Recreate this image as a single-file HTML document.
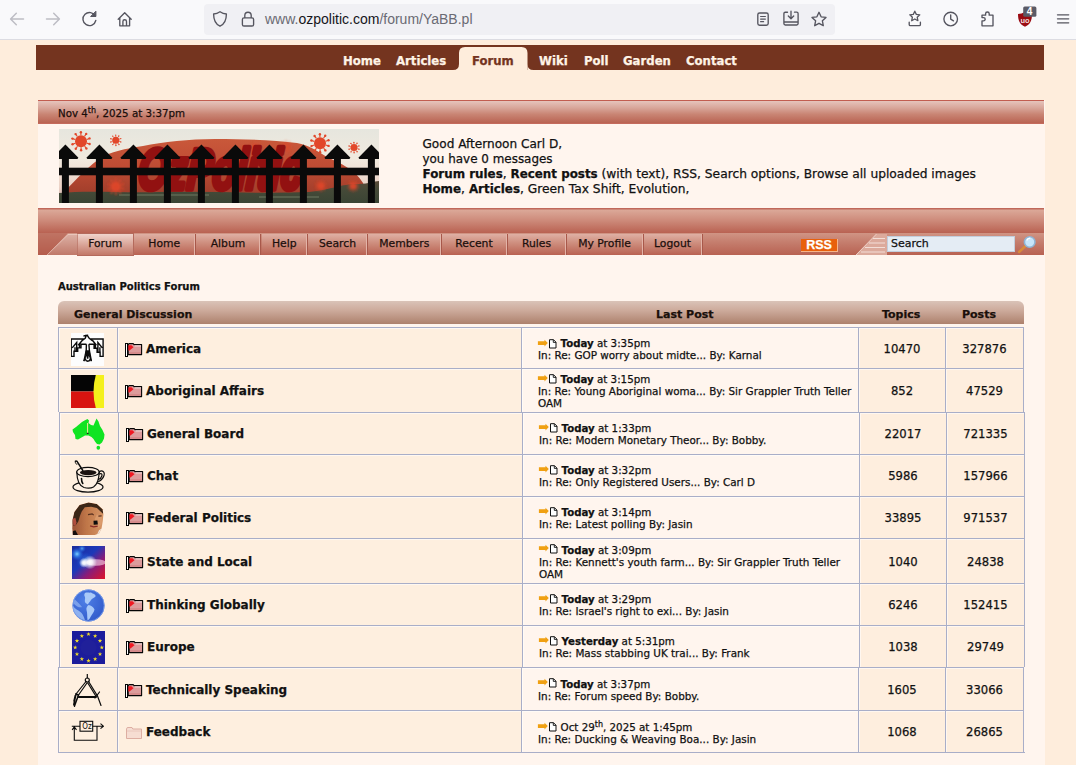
<!DOCTYPE html>
<html><head><meta charset="utf-8"><title>Australian Politics Forum</title>
<style>
html,body{margin:0;padding:0}
body{width:1076px;height:765px;overflow:hidden;position:relative;background:#feeddc;font-family:"DejaVu Sans","Liberation Sans",sans-serif;color:#111}
.abs,.abs *{position:absolute}
div,span,a,svg{position:absolute;white-space:nowrap}
b,sup{position:static}
/* browser chrome */
#chrome{left:0;top:0;width:1076px;height:39px;background:#f9f9fb;border-bottom:1px solid #dcdce2}
#url{left:204px;top:4px;width:631px;height:31px;background:#f0f0f4;border-radius:4px}
#urlt{left:265px;top:11px;font:14px/17px "Liberation Sans",sans-serif;color:#6a6a73}
#urlt b{font-weight:normal;color:#15141a}
#urlt,#chromeicons text{-webkit-text-stroke:0}
/* top nav */
#topnav{left:36px;top:45px;width:1008px;height:25px;background:#74341f}
#topnav a{top:7.5px;font:bold 13px/15px "DejaVu Sans Condensed","DejaVu Sans",sans-serif;color:#fff3e6}
#tab{left:459px;top:47px;width:70px;height:26px;background:#feeddc;border-radius:9px 9px 0 0}
/* container */
#cont{left:38px;top:100px;width:1007px;height:665px;background:#fff5ee}
.bar{left:0;width:1006px}
#datebar{top:0;height:22px;background:linear-gradient(#e6c4bc 0,#d9a79b 30%,#c98574 60%,#b96352 100%);border-top:1px solid #c25d50;border-bottom:1px solid #c46a5c}
#date{left:20px;top:7px;font:10.25px/13px "DejaVu Sans",sans-serif;color:#1a0d0a}
#date sup{font-size:8px;line-height:0;vertical-align:4px}
#midbar{top:108px;height:25px;background:linear-gradient(#c0685a 0,#c0685a 4%,#dba898 8%,#cf8e7e 45%,#b96252 100%)}
#menubar{top:133px;height:22px;background:linear-gradient(#d09484 0,#c47c6c 45%,#b86252 100%)}
#hello{left:384.5px;top:36.500px;font:12.25px/15.050px "DejaVu Sans",sans-serif;color:#111;white-space:pre}
#menu{left:0;top:233px;width:1076px;height:22px}
.mi{top:1px;height:21px;font:10.8px/19px "DejaVu Sans",sans-serif;color:#1c0f0c;text-align:center;box-sizing:border-box;border-right:1px solid #a8584a;box-shadow:inset -1px 0 0 #e3b4a8;background:linear-gradient(#dfb0a4 0,#cd8c7c 45%,#b96252 100%)}
.mi.act{top:0;height:23px;line-height:19px;border:1px solid #b46a5c;background:linear-gradient(#f0d4cc 0,#dcaa9e 45%,#c27868 100%);box-shadow:none}
#rss{left:801px;top:239px;width:36px;height:12px;background:#e8600c;border-right:1px solid #f6b48a;border-bottom:1px solid #f6b48a;color:#fff;font:bold 12.5px/12.5px "Liberation Sans",sans-serif;text-align:center}
#sbox{left:887px;top:236px;width:128px;height:16px;background:#e4ecf4;border:1px solid #c3cedc;box-sizing:border-box;font:11px/14px "DejaVu Sans",sans-serif;padding-left:3px;color:#111}
#hello b{font-size:11.9px}
#hello span{position:static}
#hello .h1{font-size:12.1px}
#hello .h2{font-size:11.95px}
body{-webkit-text-stroke:0.25px currentColor}
#title{left:20px;top:181px;font:bold 10px/12px "DejaVu Sans",sans-serif;color:#111}
/* table */
#thead{left:58px;top:301px;width:966px;height:23px;border-radius:6px 6px 0 0;background:linear-gradient(#dac3b8 0,#cdab9c 40%,#ad816d 100%)}
#thead span{top:7px;font:bold 11px/13px "DejaVu Sans",sans-serif;color:#1a0f0a}
.row{left:58px;width:966px;border-top:1px solid #a9aec8}
.row.s{left:59px}
.row div{top:0;bottom:0;box-shadow:inset 1px 1px 0 rgba(255,255,255,.55)}
.c1{left:0;width:59px;background:#feefdf;border-left:1px solid #a9aec8}
.c2{left:59px;width:404px;background:#feefdf;border-left:1px solid #a9aec8}
.c3{left:463px;width:337px;background:#fff5ee;border-left:1px solid #a9aec8}
.c4{left:800px;width:86px;background:#feeede;border-left:1px solid #a9aec8}
.c5{left:887px;width:77px;background:#feeede;border-left:1px solid #a9aec8;border-right:1px solid #a9aec8}
.nm{left:28px;font:bold 12px/14px "DejaVu Sans",sans-serif;color:#111}
.lp{left:16px;font:10.4px/12px "DejaVu Sans",sans-serif;color:#111;white-space:pre}
.lp .l1{position:static;font-size:10.3px;padding-left:22.6px;line-height:0}
.lp .l1 *{line-height:0}
.lp .l1 b{font-size:10.2px}
.lp sup{font-size:8px;line-height:0;vertical-align:4px}
.num{left:0;right:0;text-align:center;font:11.6px/14px "DejaVu Sans",sans-serif;color:#111}
</style></head><body>
<div id="chrome"></div>
<div id="url"></div>
<div id="urlt">www.<b>ozpolitic.com</b>/forum/YaBB.pl</div>

<div id="topnav">
<a style="left:307px">Home</a><a style="left:360px">Articles</a><a style="left:503px">Wiki</a><a style="left:548px">Poll</a><a style="left:587px">Garden</a><a style="left:650px">Contact</a>
</div>
<svg width="90" height="30" style="position:absolute;left:450px;top:44px"><path d="M3.500 26.500h5.500v-0.500q0-.1 0-.5v-16.500q0-6 6-6h56.500q6 0 6 6v16.500q0 .400 0 1h5.500v4h-80z" fill="#feeddc"/><path d="M3 26q6 0 6-6v6zM83.500 26q-6 0-6-6v6z" fill="#feeddc"/></svg>
<a style="left:472px;top:52.5px;font:bold 13px/15px 'DejaVu Sans Condensed','DejaVu Sans',sans-serif;color:#74341f">Forum</a>

<div id="cont">
 <div class="bar" id="datebar"></div>
 <div id="date">Nov 4<sup>th</sup>, 2025 at 3:37pm</div>
 <div id="hello"><span class="h1">Good Afternoon Carl D,</span>
<span class="h2">you have 0 messages</span>
<b>Forum rules</b>, <b>Recent posts</b> (with text), RSS, Search options, Browse all uploaded images
<b>Home</b>, <b>Articles</b>, Green Tax Shift, Evolution,</div>
 <div class="bar" id="midbar"></div>
 <div class="bar" id="menubar"></div>
 <div id="title">Australian Politics Forum</div>
</div>

<svg width="0" height="0" style="position:absolute"><defs>
<radialGradient id="gGlobe" cx=".4" cy=".35" r=".75"><stop offset="0" stop-color="#4e7fe6"/><stop offset="1" stop-color="#2f57c8"/></radialGradient>
<radialGradient id="gW" cx=".5" cy=".5" r=".5"><stop offset="0" stop-color="#fff"/><stop offset=".35" stop-color="#fff" stop-opacity=".85"/><stop offset="1" stop-color="#fff" stop-opacity="0"/></radialGradient>
<radialGradient id="gB" cx=".5" cy=".5" r=".5"><stop offset="0" stop-color="#7fd0ff"/><stop offset=".4" stop-color="#3a8cf0" stop-opacity=".8"/><stop offset="1" stop-color="#2060e0" stop-opacity="0"/></radialGradient>
<linearGradient id="gPol" x1="0" y1="0" x2="1" y2="1"><stop offset="0" stop-color="#1a2c9c"/><stop offset=".42" stop-color="#1c38b8"/><stop offset=".66" stop-color="#8a1c78"/><stop offset="1" stop-color="#e01428"/></linearGradient>
<filter id="b1"><feGaussianBlur stdDeviation="0.6"/></filter>
<symbol id="ic_america" viewBox="0 0 33 33"><rect width="33" height="33" fill="#fdfdfd"/><path d="M13.9 6.0 L0.2 6.0 L0.2 23.4 L3.0 23.4 L3.0 18.2 L6.7 18.2 L6.7 14.9 L10.0 14.9 L10.0 11.2 L15.4 11.2 M18.4 6.0 L32.1 6.0 L32.1 23.4 L29.1 23.4 L29.1 19.2 L26.1 19.2 L26.1 15.2 L23.1 15.2 L23.1 11.2 L17.9 11.2 M1.2 14.9 L5.7 9.5 L5.7 17.7 M4.0 14.2 L4.0 17.9 M7.2 12.2 L11.4 7.2 M8.5 10.2 L8.5 14.7 M31.3 14.9 L26.9 9.5 L26.9 18.9 M28.9 14.2 L28.9 18.9 M25.4 12.2 L21.4 7.2 M24.4 10.7 L24.4 14.9 M12.4 3.1 L14.4 2.5 L17.2 2.2 M15.2 2.7 L14.2 5.2 L10.9 7.7 M16.4 2.7 L18.2 5.2 L21.4 7.7 M15.4 11.2 L15.2 17.7 L12.9 28.1 M17.9 11.2 L18.4 17.7 L20.4 28.1 M14.0 25.6 L15.2 27.6 L16.7 28.2 L18.4 27.6 L19.5 25.6" fill="none" stroke="#0a0a0a" stroke-width="1.400" stroke-linejoin="miter"/><path d="M14.7 17.2 L18.7 17.2 L19.2 21.6 L17.4 23.6 L16.4 21.1 L15.7 23.6 L13.9 21.6z" fill="#0a0a0a"/><path d="M12.9 28.1 L15.9 20.1 L16.4 25.6 M20.4 28.1 L17.4 20.1 L16.8 25.6" fill="none" stroke="#0a0a0a" stroke-width="1.200"/></symbol>
<symbol id="ic_abo" viewBox="0 0 33 33"><rect width="33" height="16.500" fill="#050505"/><rect y="16.500" width="33" height="16.500" fill="#d81410"/><circle cx="82.500" cy="16.500" r="60" fill="#f4f01c"/></symbol>
<symbol id="ic_aus" viewBox="0 0 33 33"><path d="M0.500 11.500L4 9L7 6.500L10 4L12.500 2.500L15.500 1L17 2.500L16.500 5L19 7L21.500 7.500L23 4L24.500 0.500L26.500 3.500L28 8L30.500 12L32.500 16.500L32 20.500L30 24.500L27.500 26.500L25 26L23 23.500L21.500 21L19.500 19L16.500 17.500L13 17.500L9.500 19.500L6 21.500L3.500 21L3 17L1 14z" fill="#10e422"/><ellipse cx="26.300" cy="29.800" rx="1.800" ry="2" fill="#10e422"/><path d="M15.600 5V15" stroke="#f4e89a" stroke-width="1"/><rect x="14.800" y="14.800" width="1.800" height="1.200" fill="#222"/></symbol>
<symbol id="ic_chat" viewBox="0 0 33 33"><g fill="none" stroke="#0c0c0c" stroke-width="1.200" stroke-linecap="round">
<ellipse cx="16" cy="27" rx="15" ry="5.200" fill="#fdf0e3"/>
<path d="M4.800 12C5 20 7.500 26 12 27.500C15 28.300 19 28.300 21.500 27C25.500 24.500 27 18 27.200 12" fill="#fdf0e3"/>
<ellipse cx="16" cy="12" rx="11.300" ry="4.600" fill="#fdf0e3"/>
<ellipse cx="16.200" cy="12.600" rx="8.300" ry="2.600" fill="#1a1210" stroke="none"/>
<path d="M27 12C30.500 9.500 33 12 32 15.500C31 19 28 21.500 25.500 21.500M27.200 14C29 13 30.500 13.800 29.800 16C29.200 18 28 19 26.500 19.500"/>
<path d="M9.500 18.500C9.500 20.500 10 22.500 10.800 23.500" stroke-width="1.600"/>
<path d="M3.500 1.200C4.500 0.800 5.500 1.800 6 3L10.800 10.500" stroke-width="1.500"/>
<path d="M3.300 1.500C3 3 4 4.500 5 4.200" stroke-width="1"/>
</g></symbol>
<symbol id="ic_fed" viewBox="0 0 33 33"><defs><linearGradient id="gSkin" x1="0" y1="0" x2="1" y2="0"><stop offset="0" stop-color="#9a5236"/><stop offset=".45" stop-color="#bf7648"/><stop offset="1" stop-color="#d79666"/></linearGradient><clipPath id="cHead"><path d="M0.8 33.0 L0.3 26.2 L0.5 17.8 L2.4 9.9 L7.6 3.1 L16.5 0.5 L24.9 2.1 L30.6 7.3 L31.4 12.6 L30.7 19.4 L29.6 26.2 L27.0 31.4 L22.8 33.0z"/></clipPath></defs>
<g filter="url(#b1)"><path d="M0.8 33.0 L0.3 26.2 L0.5 17.8 L2.4 9.9 L7.6 3.1 L16.5 0.5 L24.9 2.1 L30.6 7.3 L31.4 12.6 L30.7 19.4 L29.6 26.2 L27.0 31.4 L22.8 33.0z" fill="url(#gSkin)"/><g clip-path="url(#cHead)"><path d="M24.9 12.6 L30.1 14.1 L29.6 22.0 L26.4 26.2 L23.8 23.0 L22.8 16.8z" fill="#dea070" opacity=".7"/><path d="M0.5 18.8 L2.4 9.9 L7.6 3.1 L16.5 0.5 L24.9 2.1 L30.6 7.3 L31.3 12.0 L29.1 9.9 L24.9 6.0 L19.1 4.7 L12.8 5.2 L9.7 9.4 L7.9 14.1 L6.3 19.4 L3.9 23.0 L1.8 24.1 L0.8 22.0z" fill="#3a2519"/><path d="M0.8 16.8 L3.4 15.7 L4.5 20.4 L3.4 24.1 L1.3 23.0z" fill="#b04e3e"/><path d="M0.5 33.0 L0.8 29.3 L3.4 28.3 L6.0 33.0z" fill="#14100e"/><path d="M24.9 33.0 L27.0 28.3 L30.1 26.2 L29.1 30.9 L27.5 33.0z" fill="#efe4dc"/></g>
<path d="M21.5 18.8 L25.4 18.6 L25.9 22.5 L21.7 22.8z" fill="#100a08"/><path d="M18.1 23.8 L21.7 24.9 L25.7 24.1" fill="none" stroke="#8a2c28" stroke-width="1.300"/><path d="M16.0 12.6 L20.2 11.8 L21.7 13.1 M26.4 14.1 L29.6 13.9" fill="none" stroke="#5a3020" stroke-width="1.200"/></g></symbol>
<symbol id="ic_state" viewBox="0 0 33 33"><rect width="33" height="33" fill="url(#gPol)"/><circle cx="5" cy="8" r="6.500" fill="url(#gB)"/><circle cx="10" cy="2.500" r="4" fill="url(#gB)" opacity=".7"/><circle cx="13" cy="15" r="9" fill="url(#gB)" opacity=".45"/><ellipse cx="24" cy="16.500" rx="10" ry="3.200" fill="#ffd8e6" opacity=".6" filter="url(#b1)"/><circle cx="12" cy="16.800" r="5" fill="url(#gW)"/><circle cx="18" cy="16.300" r="7" fill="url(#gW)"/></symbol>
<symbol id="ic_globe" viewBox="0 0 33 33"><circle cx="16.500" cy="16.500" r="16" fill="url(#gGlobe)"/><g fill="#a9c9f8" filter="url(#b1)">
<path d="M13 4C15 3 17 4 19 3.500C21 5 24 5 23.500 7.500C22 9.500 20 9 19 11C18 13 16.500 13.500 16 15.500L13.500 14C12 12 13.500 10 13 8C12 7 12 5 13 4z"/>
<path d="M16.500 16C19 16.500 21.500 18 22.500 20.500C22 23.500 20 25 18.500 28C17.500 30 16.500 31.500 15.500 31C15 27 15.500 24 14.500 21C14 19 15 17 16.500 16z"/>
<path d="M1 17C3 20 6 21 9 23.500C11 25.500 12 28 13 31.500C8 30 3 26 1 20z" opacity=".75"/>
<path d="M2.500 10C5 13 8 15 10 18C8 19 5 18 1.500 14.500z" opacity=".55"/>
</g><circle cx="16.500" cy="16.500" r="15.700" fill="none" stroke="#7fa4ee" stroke-width=".8"/></symbol>
<symbol id="ic_eu" viewBox="0 0 33 33"><rect width="33" height="33" fill="#1c1c9c"/><circle cx="16.500" cy="16.500" r="8" fill="#20209a"/><g fill="#f0dc28"><polygon points="16.50,0.90 17.04,2.46 18.69,2.49 17.37,3.48 17.85,5.06 16.50,4.12 15.15,5.06 15.63,3.48 14.31,2.49 15.96,2.46"/><polygon points="23.15,2.68 23.69,4.24 25.34,4.27 24.02,5.27 24.50,6.84 23.15,5.90 21.80,6.84 22.28,5.27 20.96,4.27 22.61,4.24"/><polygon points="28.02,7.55 28.56,9.11 30.21,9.14 28.89,10.13 29.37,11.71 28.02,10.77 26.67,11.71 27.14,10.13 25.83,9.14 27.48,9.11"/><polygon points="29.80,14.20 30.34,15.76 31.99,15.79 30.67,16.78 31.15,18.36 29.80,17.42 28.45,18.36 28.93,16.78 27.61,15.79 29.26,15.76"/><polygon points="28.02,20.85 28.56,22.41 30.21,22.44 28.89,23.43 29.37,25.01 28.02,24.07 26.67,25.01 27.14,23.43 25.83,22.44 27.48,22.41"/><polygon points="23.15,25.72 23.69,27.27 25.34,27.31 24.02,28.30 24.50,29.88 23.15,28.94 21.80,29.88 22.28,28.30 20.96,27.31 22.61,27.27"/><polygon points="16.50,27.50 17.04,29.06 18.69,29.09 17.37,30.08 17.85,31.66 16.50,30.72 15.15,31.66 15.63,30.08 14.31,29.09 15.96,29.06"/><polygon points="9.85,25.72 10.39,27.27 12.04,27.31 10.72,28.30 11.20,29.88 9.85,28.94 8.50,29.88 8.98,28.30 7.66,27.31 9.31,27.27"/><polygon points="4.98,20.85 5.52,22.41 7.17,22.44 5.86,23.43 6.33,25.01 4.98,24.07 3.63,25.01 4.11,23.43 2.79,22.44 4.44,22.41"/><polygon points="3.20,14.20 3.74,15.76 5.39,15.79 4.07,16.78 4.55,18.36 3.20,17.42 1.85,18.36 2.33,16.78 1.01,15.79 2.66,15.76"/><polygon points="4.98,7.55 5.52,9.11 7.17,9.14 5.86,10.13 6.33,11.71 4.98,10.77 3.63,11.71 4.11,10.13 2.79,9.14 4.44,9.11"/><polygon points="9.85,2.68 10.39,4.24 12.04,4.27 10.72,5.27 11.20,6.84 9.85,5.90 8.50,6.84 8.98,5.27 7.66,4.27 9.31,4.24"/></g></symbol>
<symbol id="ic_tech" viewBox="0 0 33 33"><g fill="none" stroke="#0c0c0c" stroke-width="1.200" stroke-linecap="round">
<path d="M16.300 0.500V4"/><circle cx="16.300" cy="6" r="2"/>
<path d="M15 7.500L5 20M17.600 7.500L26.500 22L30 31.500M16 9L7.500 21M16.800 9L24.500 21.500"/>
<path d="M5 20L7.500 21L3.500 32L2.800 30.500zM4.300 21.500L3 27" stroke-width="1.500"/>
<path d="M7.500 23H25" stroke-width="1.800"/>
<path d="M24 24L28.500 18"/>
</g></symbol>
<symbol id="ic_feed" viewBox="0 0 33 33"><g fill="none" stroke="#0c0c0c" stroke-width="1.100">
<path d="M0.800 10.200H9M21.700 10.200H32.500M29.500 7.700L32.500 10.200L29.500 12.700M26 10.200V24.300H3.300V11.200M1.100 13.900L3.300 11L5.500 13.900"/>
<rect x="9" y="5.300" width="12.700" height="9.900"/></g>
<text x="11.300" y="13.200" font-family="DejaVu Sans Condensed, DejaVu Sans, sans-serif" font-size="8" fill="#0c0c0c" style="-webkit-text-stroke:0">Oz</text></symbol>
<symbol id="fold_new" viewBox="0 0 18 14"><rect x=".5" y=".5" width="2" height="13.400" fill="#fff" stroke="#050505" stroke-width="1"/><path d="M3.200 1.600L4 .600H8.200L9 1.600H16.600V11.600H3.200z" fill="#dc9c9c" stroke="#050505" stroke-width="1.100" stroke-linejoin="round"/><path d="M9.500 2.900H16" stroke="#fbeeee" stroke-width=".9"/><path d="M3.300 2.300H6.500L8.500 4.300L6 6.300L4.500 7.500H3.300z" fill="#f01822"/><path d="M4 9.500h12M4 10.500h12" stroke="#d08080" stroke-width=".6"/></symbol>
<symbol id="fold_old" viewBox="0 0 18 14"><path d="M1.500 3L2.300 1.500H7L7.800 3H16.500V12.500H1.500z" fill="#f6ddd2" stroke="#d9a79c" stroke-width=".9" stroke-linejoin="round"/><path d="M2 5h14" stroke="#e9c4b8" stroke-width=".8"/></symbol>
<symbol id="newpost" viewBox="0 0 20 10"><path d="M.9 2.300H7.500V.800L10.800 4.100L7.500 7.500V5.900H.9z" fill="#f0a012"/><path d="M12.500 .700H16.500L19 3.200V9H12.500z" fill="#fff" stroke="#111" stroke-width="1"/><path d="M16.300 .700V3.400H19" fill="none" stroke="#111" stroke-width=".9"/></symbol>
</defs></svg>
<svg id="chromeicons" width="1076" height="39" viewBox="0 0 1076 39" style="position:absolute;left:0;top:0" fill="none" stroke-linecap="round" stroke-linejoin="round">
<g stroke="#bdbdc4" stroke-width="1.5">
<path d="M23.5 19H10.8M16.3 13.3L10.6 19l5.7 5.7"/>
<path d="M46.5 19H59.2M53.7 13.3L59.4 19l-5.7 5.7"/>
</g>
<g stroke="#55555f" stroke-width="1.35">
<!-- reload -->
<path d="M95.3 16.2A6.5 6.5 0 1 0 95.8 20.5"/>
<path d="M95.9 11.6v4.9h-4.9z" fill="#55555f" stroke-width="1"/>
<!-- home -->
<path d="M118.2 19.2L124.7 12.8l6.5 6.4M119.8 18v7.8h9.8V18M122.9 25.8v-4.300a1.8 1.8 0 0 1 3.600 0v4.300"/>
<!-- shield -->
<path d="M220 11.800c2.200 1.500 4.300 2.100 6.400 2.200c0 6-1.500 10-6.400 12.200c-4.900-2.200-6.400-6.200-6.400-12.200c2.100-.1 4.200-.7 6.400-2.200z"/>
<!-- lock -->
<rect x="242.400" y="17.800" width="11.200" height="8.200" rx="1.600"/>
<path d="M244.800 17.600v-2.200a3.200 3.200 0 0 1 6.400 0v2.200"/>
<!-- reader -->
<rect x="757.800" y="13" width="10.400" height="12.200" rx="1.800"/>
<path d="M760.600 16.500h4.800M760.600 19.100h4.800M760.600 21.700h3" stroke-width="1.200"/>
<!-- download tray -->
<path d="M787.500 12.200h-2.200a1.400 1.400 0 0 0-1.400 1.400v10a1.400 1.400 0 0 0 1.400 1.400h11.400a1.400 1.400 0 0 0 1.400-1.400v-10a1.400 1.400 0 0 0-1.400-1.400h-2.200M784.200 22h13.600"/>
<path d="M791 11.200v7.200M788.300 16l2.700 2.700l2.700-2.700" />
<!-- star -->
<path d="M819 12.300l2.100 4.500l4.900.6l-3.600 3.400l.9 4.900l-4.300-2.400l-4.300 2.400l.9-4.900l-3.600-3.400l4.900-.6z"/>
<!-- bookmark tray -->
<path d="M914.800 11.200l1.500 3.200l3.500.4l-2.600 2.400l.7 3.500l-3.100-1.700l-3.100 1.700l.7-3.500l-2.600-2.400l3.500-.4z" stroke-width="1.300"/>
<path d="M909.200 22.200v2.200a1.200 1.200 0 0 0 1.200 1.200h8.800a1.200 1.200 0 0 0 1.200-1.200v-2.200"/>
<!-- clock -->
<circle cx="950.700" cy="19" r="6.800"/>
<path d="M950.700 14.800v4.400l2.800 1.600"/>
<!-- puzzle -->
<path d="M982 25.800v-5h1.600a1.500 1.500 0 0 0 0-3.200H982v-2.400h3.600v-1.400a1.800 1.800 0 0 1 3.600 0v1.400h3.800v10.600z"/>
<!-- menu -->
<path d="M1057.500 14.800h11.200M1057.500 18.800h11.200M1057.500 22.800h11.200"/>
</g>
<!-- ublock -->
<path d="M1025 12c2.300 1.300 4.700 1.900 7 2c0 6.600-1.800 10.400-7 12.800c-5.200-2.400-7-6.200-7-12.800c2.300-.1 4.700-.7 7-2z" fill="#9a0b12"/>
<text x="1020.500" y="22.500" font-family="Liberation Sans, sans-serif" font-size="7.500" font-weight="bold" fill="#f4dede" stroke="none">uo</text>
<rect x="1023.200" y="6.500" width="13.200" height="10.200" rx="1.500" fill="#5b5b66"/>
<text x="1026.800" y="15.200" font-family="Liberation Sans, sans-serif" font-size="10" font-weight="bold" fill="#fff" stroke="none">4</text>
</svg>
<svg id="logo" width="320" height="74" viewBox="0 0 320 74" style="position:absolute;left:59px;top:129px">
<defs><linearGradient id="sky" x1="0" y1="0" x2="0" y2="1"><stop offset="0" stop-color="#e6e6de"/><stop offset=".4" stop-color="#f1eadf"/><stop offset=".78" stop-color="#ecd2c6"/><stop offset="1" stop-color="#c9a8a8"/></linearGradient><linearGradient id="rock" x1="0" y1="0" x2="0" y2="1"><stop offset="0" stop-color="#c9583a"/><stop offset=".5" stop-color="#bf4c34"/><stop offset="1" stop-color="#a03e2b"/></linearGradient><linearGradient id="gnd" x1="0" y1="0" x2="0" y2="1"><stop offset="0" stop-color="#5a4a38"/><stop offset=".4" stop-color="#454a38"/><stop offset="1" stop-color="#3a4434"/></linearGradient><filter id="bl"><feGaussianBlur stdDeviation="0.8"/></filter></defs>
<rect width="320" height="74" fill="url(#sky)"/>
<path d="M4 64C12 56 24 42 40 30C52 22 66 20 84 17C104 13 130 10 156 10C185 10 215 11 238 14C250 16 258 22 268 28C282 35 296 40 304 54L308 65H4z" fill="url(#rock)"/>
<path d="M0 64C30 61 60 64 100 63C150 62 200 65 250 63C275 60 285 54 300 55C310 55 315 52 320 52V74H0z" fill="url(#gnd)"/>
<path d="M60 66h90M200 68h60" stroke="#66705a" stroke-width="2" opacity=".6"/>
<g opacity="1.0" fill="#e2472a" stroke="#e2472a"><circle cx="22" cy="12.3" r="6" stroke="none"/><path d="M27.7 14.1L30.6 15.0" stroke-width="1.1"/><circle cx="30.6" cy="15.0" r="1.2" stroke="none"/><path d="M25.6 17.1L27.4 19.5" stroke-width="1.1"/><circle cx="27.4" cy="19.5" r="1.2" stroke="none"/><path d="M22.1 18.3L22.1 21.3" stroke-width="1.1"/><circle cx="22.1" cy="21.3" r="1.2" stroke="none"/><path d="M18.5 17.2L16.8 19.7" stroke-width="1.1"/><circle cx="16.8" cy="19.7" r="1.2" stroke="none"/><path d="M16.3 14.2L13.5 15.2" stroke-width="1.1"/><circle cx="13.5" cy="15.2" r="1.2" stroke="none"/><path d="M16.3 10.5L13.4 9.6" stroke-width="1.1"/><circle cx="13.4" cy="9.6" r="1.2" stroke="none"/><path d="M18.4 7.5L16.6 5.1" stroke-width="1.1"/><circle cx="16.6" cy="5.1" r="1.2" stroke="none"/><path d="M21.9 6.3L21.9 3.3" stroke-width="1.1"/><circle cx="21.9" cy="3.3" r="1.2" stroke="none"/><path d="M25.5 7.4L27.2 4.9" stroke-width="1.1"/><circle cx="27.2" cy="4.9" r="1.2" stroke="none"/><path d="M27.7 10.4L30.5 9.4" stroke-width="1.1"/><circle cx="30.5" cy="9.4" r="1.2" stroke="none"/></g>
<g opacity="1.0" fill="#e2472a" stroke="#e2472a"><circle cx="56.8" cy="11.3" r="3.5" stroke="none"/><path d="M60.1 12.3L61.8 12.9" stroke-width="0.7"/><circle cx="61.8" cy="12.9" r="0.7" stroke="none"/><path d="M58.9 14.1L59.9 15.5" stroke-width="0.7"/><circle cx="59.9" cy="15.5" r="0.7" stroke="none"/><path d="M56.8 14.8L56.9 16.5" stroke-width="0.7"/><circle cx="56.9" cy="16.5" r="0.7" stroke="none"/><path d="M54.8 14.2L53.8 15.6" stroke-width="0.7"/><circle cx="53.8" cy="15.6" r="0.7" stroke="none"/><path d="M53.5 12.4L51.8 13.0" stroke-width="0.7"/><circle cx="51.8" cy="13.0" r="0.7" stroke="none"/><path d="M53.5 10.3L51.8 9.7" stroke-width="0.7"/><circle cx="51.8" cy="9.7" r="0.7" stroke="none"/><path d="M54.7 8.5L53.7 7.1" stroke-width="0.7"/><circle cx="53.7" cy="7.1" r="0.7" stroke="none"/><path d="M56.8 7.8L56.7 6.1" stroke-width="0.7"/><circle cx="56.7" cy="6.1" r="0.7" stroke="none"/><path d="M58.8 8.4L59.8 7.0" stroke-width="0.7"/><circle cx="59.8" cy="7.0" r="0.7" stroke="none"/><path d="M60.1 10.2L61.8 9.6" stroke-width="0.7"/><circle cx="61.8" cy="9.6" r="0.7" stroke="none"/></g>
<g opacity="1.0" fill="#e2472a" stroke="#e2472a"><circle cx="261" cy="14.2" r="6" stroke="none"/><path d="M266.7 16.0L269.6 16.9" stroke-width="1.1"/><circle cx="269.6" cy="16.9" r="1.2" stroke="none"/><path d="M264.6 19.0L266.4 21.4" stroke-width="1.1"/><circle cx="266.4" cy="21.4" r="1.2" stroke="none"/><path d="M261.1 20.2L261.1 23.2" stroke-width="1.1"/><circle cx="261.1" cy="23.2" r="1.2" stroke="none"/><path d="M257.5 19.1L255.8 21.6" stroke-width="1.1"/><circle cx="255.8" cy="21.6" r="1.2" stroke="none"/><path d="M255.3 16.1L252.5 17.1" stroke-width="1.1"/><circle cx="252.5" cy="17.1" r="1.2" stroke="none"/><path d="M255.3 12.4L252.4 11.5" stroke-width="1.1"/><circle cx="252.4" cy="11.5" r="1.2" stroke="none"/><path d="M257.4 9.4L255.6 7.0" stroke-width="1.1"/><circle cx="255.6" cy="7.0" r="1.2" stroke="none"/><path d="M260.9 8.2L260.9 5.2" stroke-width="1.1"/><circle cx="260.9" cy="5.2" r="1.2" stroke="none"/><path d="M264.5 9.3L266.2 6.8" stroke-width="1.1"/><circle cx="266.2" cy="6.8" r="1.2" stroke="none"/><path d="M266.7 12.3L269.5 11.3" stroke-width="1.1"/><circle cx="269.5" cy="11.3" r="1.2" stroke="none"/></g>
<g opacity="1.0" fill="#e2472a" stroke="#e2472a"><circle cx="295" cy="18.6" r="3.5" stroke="none"/><path d="M298.3 19.6L300.0 20.2" stroke-width="0.7"/><circle cx="300.0" cy="20.2" r="0.7" stroke="none"/><path d="M297.1 21.4L298.1 22.8" stroke-width="0.7"/><circle cx="298.1" cy="22.8" r="0.7" stroke="none"/><path d="M295.0 22.1L295.1 23.8" stroke-width="0.7"/><circle cx="295.1" cy="23.8" r="0.7" stroke="none"/><path d="M293.0 21.5L292.0 22.9" stroke-width="0.7"/><circle cx="292.0" cy="22.9" r="0.7" stroke="none"/><path d="M291.7 19.7L290.0 20.3" stroke-width="0.7"/><circle cx="290.0" cy="20.3" r="0.7" stroke="none"/><path d="M291.7 17.6L290.0 17.0" stroke-width="0.7"/><circle cx="290.0" cy="17.0" r="0.7" stroke="none"/><path d="M292.9 15.8L291.9 14.4" stroke-width="0.7"/><circle cx="291.9" cy="14.4" r="0.7" stroke="none"/><path d="M295.0 15.1L294.9 13.4" stroke-width="0.7"/><circle cx="294.9" cy="13.4" r="0.7" stroke="none"/><path d="M297.0 15.7L298.0 14.3" stroke-width="0.7"/><circle cx="298.0" cy="14.3" r="0.7" stroke="none"/><path d="M298.3 17.5L300.0 16.9" stroke-width="0.7"/><circle cx="300.0" cy="16.9" r="0.7" stroke="none"/></g>
<g filter="url(#bl)"><g opacity="0.9" fill="#e2472a" stroke="#e2472a"><circle cx="56.8" cy="57.6" r="5" stroke="none"/><path d="M61.6 59.1L64.0 59.8" stroke-width="0.9"/><circle cx="64.0" cy="59.8" r="1.0" stroke="none"/><path d="M59.8 61.6L61.3 63.6" stroke-width="0.9"/><circle cx="61.3" cy="63.6" r="1.0" stroke="none"/><path d="M56.9 62.6L56.9 65.1" stroke-width="0.9"/><circle cx="56.9" cy="65.1" r="1.0" stroke="none"/><path d="M53.9 61.7L52.5 63.7" stroke-width="0.9"/><circle cx="52.5" cy="63.7" r="1.0" stroke="none"/><path d="M52.1 59.2L49.7 60.0" stroke-width="0.9"/><circle cx="49.7" cy="60.0" r="1.0" stroke="none"/><path d="M52.0 56.1L49.6 55.4" stroke-width="0.9"/><circle cx="49.6" cy="55.4" r="1.0" stroke="none"/><path d="M53.8 53.6L52.3 51.6" stroke-width="0.9"/><circle cx="52.3" cy="51.6" r="1.0" stroke="none"/><path d="M56.7 52.6L56.7 50.1" stroke-width="0.9"/><circle cx="56.7" cy="50.1" r="1.0" stroke="none"/><path d="M59.7 53.5L61.1 51.5" stroke-width="0.9"/><circle cx="61.1" cy="51.5" r="1.0" stroke="none"/><path d="M61.5 56.0L63.9 55.2" stroke-width="0.9"/><circle cx="63.9" cy="55.2" r="1.0" stroke="none"/></g><g opacity="0.6" fill="#e2472a" stroke="#e2472a"><circle cx="196.3" cy="19" r="4" stroke="none"/><path d="M200.1 20.2L202.0 20.8" stroke-width="0.7"/><circle cx="202.0" cy="20.8" r="0.8" stroke="none"/><path d="M198.7 22.2L199.9 23.8" stroke-width="0.7"/><circle cx="199.9" cy="23.8" r="0.8" stroke="none"/><path d="M196.4 23.0L196.4 25.0" stroke-width="0.7"/><circle cx="196.4" cy="25.0" r="0.8" stroke="none"/><path d="M194.0 22.3L192.8 23.9" stroke-width="0.7"/><circle cx="192.8" cy="23.9" r="0.8" stroke="none"/><path d="M192.5 20.3L190.6 20.9" stroke-width="0.7"/><circle cx="190.6" cy="20.9" r="0.8" stroke="none"/><path d="M192.5 17.8L190.6 17.2" stroke-width="0.7"/><circle cx="190.6" cy="17.2" r="0.8" stroke="none"/><path d="M193.9 15.8L192.7 14.2" stroke-width="0.7"/><circle cx="192.7" cy="14.2" r="0.8" stroke="none"/><path d="M196.2 15.0L196.2 13.0" stroke-width="0.7"/><circle cx="196.2" cy="13.0" r="0.8" stroke="none"/><path d="M198.6 15.7L199.8 14.1" stroke-width="0.7"/><circle cx="199.8" cy="14.1" r="0.8" stroke="none"/><path d="M200.1 17.7L202.0 17.1" stroke-width="0.7"/><circle cx="202.0" cy="17.1" r="0.8" stroke="none"/></g><g opacity="0.6" fill="#e2472a" stroke="#e2472a"><circle cx="227" cy="18" r="4" stroke="none"/><path d="M230.8 19.2L232.7 19.8" stroke-width="0.7"/><circle cx="232.7" cy="19.8" r="0.8" stroke="none"/><path d="M229.4 21.2L230.6 22.8" stroke-width="0.7"/><circle cx="230.6" cy="22.8" r="0.8" stroke="none"/><path d="M227.1 22.0L227.1 24.0" stroke-width="0.7"/><circle cx="227.1" cy="24.0" r="0.8" stroke="none"/><path d="M224.7 21.3L223.5 22.9" stroke-width="0.7"/><circle cx="223.5" cy="22.9" r="0.8" stroke="none"/><path d="M223.2 19.3L221.3 19.9" stroke-width="0.7"/><circle cx="221.3" cy="19.9" r="0.8" stroke="none"/><path d="M223.2 16.8L221.3 16.2" stroke-width="0.7"/><circle cx="221.3" cy="16.2" r="0.8" stroke="none"/><path d="M224.6 14.8L223.4 13.2" stroke-width="0.7"/><circle cx="223.4" cy="13.2" r="0.8" stroke="none"/><path d="M226.9 14.0L226.9 12.0" stroke-width="0.7"/><circle cx="226.9" cy="12.0" r="0.8" stroke="none"/><path d="M229.3 14.7L230.5 13.1" stroke-width="0.7"/><circle cx="230.5" cy="13.1" r="0.8" stroke="none"/><path d="M230.8 16.7L232.7 16.1" stroke-width="0.7"/><circle cx="232.7" cy="16.1" r="0.8" stroke="none"/></g><g opacity="0.9" fill="#e2472a" stroke="#e2472a"><circle cx="261.8" cy="56.8" r="3.6" stroke="none"/><path d="M265.2 57.9L267.0 58.4" stroke-width="0.7"/><circle cx="267.0" cy="58.4" r="0.7" stroke="none"/><path d="M264.0 59.7L265.0 61.1" stroke-width="0.7"/><circle cx="265.0" cy="61.1" r="0.7" stroke="none"/><path d="M261.9 60.4L261.9 62.2" stroke-width="0.7"/><circle cx="261.9" cy="62.2" r="0.7" stroke="none"/><path d="M259.7 59.7L258.7 61.2" stroke-width="0.7"/><circle cx="258.7" cy="61.2" r="0.7" stroke="none"/><path d="M258.4 58.0L256.7 58.5" stroke-width="0.7"/><circle cx="256.7" cy="58.5" r="0.7" stroke="none"/><path d="M258.4 55.7L256.6 55.2" stroke-width="0.7"/><circle cx="256.6" cy="55.2" r="0.7" stroke="none"/><path d="M259.6 53.9L258.6 52.5" stroke-width="0.7"/><circle cx="258.6" cy="52.5" r="0.7" stroke="none"/><path d="M261.7 53.2L261.7 51.4" stroke-width="0.7"/><circle cx="261.7" cy="51.4" r="0.7" stroke="none"/><path d="M263.9 53.9L264.9 52.4" stroke-width="0.7"/><circle cx="264.9" cy="52.4" r="0.7" stroke="none"/><path d="M265.2 55.6L266.9 55.1" stroke-width="0.7"/><circle cx="266.9" cy="55.1" r="0.7" stroke="none"/></g><g opacity="0.9" fill="#e2472a" stroke="#e2472a"><circle cx="294.2" cy="57" r="3.6" stroke="none"/><path d="M297.6 58.1L299.4 58.6" stroke-width="0.7"/><circle cx="299.4" cy="58.6" r="0.7" stroke="none"/><path d="M296.4 59.9L297.4 61.3" stroke-width="0.7"/><circle cx="297.4" cy="61.3" r="0.7" stroke="none"/><path d="M294.3 60.6L294.3 62.4" stroke-width="0.7"/><circle cx="294.3" cy="62.4" r="0.7" stroke="none"/><path d="M292.1 59.9L291.1 61.4" stroke-width="0.7"/><circle cx="291.1" cy="61.4" r="0.7" stroke="none"/><path d="M290.8 58.2L289.1 58.7" stroke-width="0.7"/><circle cx="289.1" cy="58.7" r="0.7" stroke="none"/><path d="M290.8 55.9L289.0 55.4" stroke-width="0.7"/><circle cx="289.0" cy="55.4" r="0.7" stroke="none"/><path d="M292.0 54.1L291.0 52.7" stroke-width="0.7"/><circle cx="291.0" cy="52.7" r="0.7" stroke="none"/><path d="M294.1 53.4L294.1 51.6" stroke-width="0.7"/><circle cx="294.1" cy="51.6" r="0.7" stroke="none"/><path d="M296.3 54.1L297.3 52.6" stroke-width="0.7"/><circle cx="297.3" cy="52.6" r="0.7" stroke="none"/><path d="M297.6 55.8L299.3 55.3" stroke-width="0.7"/><circle cx="299.3" cy="55.3" r="0.7" stroke="none"/></g></g>
<text x="78" y="60" font-family="Liberation Sans, sans-serif" font-weight="bold" font-style="italic" font-size="37" fill="#921111" stroke="#921111" stroke-width="3.600" stroke-linejoin="round" textLength="164" lengthAdjust="spacingAndGlyphs" transform="translate(0 60) scale(1 1.55) skewX(-7) translate(0 -60)">OzPolitic</text>
<g fill="#0a0a0a"><rect x="0" y="38.700" width="320" height="7.600"/><rect x="2.9" y="24" width="7" height="50"/><path d="M6.4 15.500L19.4 28.700L18.4 30H-5.6L-6.6 28.700z"/><rect x="36.9" y="24" width="7" height="50"/><path d="M40.4 15.500L53.4 28.700L52.4 30H28.4L27.4 28.700z"/><rect x="70.9" y="24" width="7" height="50"/><path d="M74.4 15.500L87.4 28.700L86.4 30H62.4L61.4 28.700z"/><rect x="104.9" y="24" width="7" height="50"/><path d="M108.4 15.500L121.4 28.700L120.4 30H96.4L95.4 28.700z"/><rect x="138.9" y="24" width="7" height="50"/><path d="M142.4 15.500L155.4 28.700L154.4 30H130.4L129.4 28.700z"/><rect x="172.9" y="24" width="7" height="50"/><path d="M176.4 15.500L189.4 28.700L188.4 30H164.4L163.4 28.700z"/><rect x="206.9" y="24" width="7" height="50"/><path d="M210.4 15.500L223.4 28.700L222.4 30H198.4L197.4 28.700z"/><rect x="240.9" y="24" width="7" height="50"/><path d="M244.4 15.500L257.4 28.700L256.4 30H232.4L231.4 28.700z"/><rect x="274.9" y="24" width="7" height="50"/><path d="M278.4 15.500L291.4 28.700L290.4 30H266.4L265.4 28.700z"/><rect x="308.9" y="24" width="7" height="50"/><path d="M312.4 15.500L325.4 28.700L324.4 30H300.4L299.4 28.700z"/></g>
</svg>
<div id="menu">
<a class="mi act" style="left:76.5px;width:57.5px">Forum</a>
<a class="mi" style="left:134.0px;width:61.6px">Home</a>
<a class="mi" style="left:195.6px;width:65.9px">Album</a>
<a class="mi" style="left:261.5px;width:46.5px">Help</a>
<a class="mi" style="left:308.0px;width:60.0px">Search</a>
<a class="mi" style="left:368.0px;width:73.5px">Members</a>
<a class="mi" style="left:441.5px;width:66.0px">Recent</a>
<a class="mi" style="left:507.5px;width:59.0px">Rules</a>
<a class="mi" style="left:566.5px;width:77.0px">My Profile</a>
<a class="mi" style="left:643.5px;width:59.0px">Logout</a>
</div>
<svg width="40" height="22" style="position:absolute;left:38px;top:233px"><defs><linearGradient id="wg" x1="0" y1="0" x2="0" y2="1"><stop offset="0" stop-color="#dcb0a4"/><stop offset="1" stop-color="#c0796a"/></linearGradient></defs><path d="M9 22L30 1.500h9.500V22z" fill="url(#wg)"/><path d="M9 22L30 1.500h9.500" fill="none" stroke="#e9c6bb" stroke-width="1"/><path d="M0 0h30L9 22H0z" fill="#b35a49" opacity=".55"/></svg>
<div id="rss"><b>RSS</b></div>
<svg width="32" height="23" style="position:absolute;left:855px;top:233px"><path d="M1 22L21.500 1h10.500v21z" fill="#dcaa9c"/><path d="M1 22L21.500 1" stroke="#efd3ca" stroke-width="1" fill="none"/><path d="M18 5.500h12M14 10h16M10 14.500h20M6 19h24" stroke="#f3ded7" stroke-width="1.200"/></svg>
<div id="sbox">Search</div>
<svg width="22" height="20" style="position:absolute;left:1017px;top:234px"><path d="M8.500 12L2 18" stroke="#d98b3a" stroke-width="2.400" stroke-linecap="round"/><circle cx="12.700" cy="8" r="5.300" fill="#c7e6fb" stroke="#8fb4d4" stroke-width="1.600"/><path d="M9.800 6.500a3.500 3.500 0 0 1 3.500-2.300" stroke="#fff" stroke-width="1.200" fill="none"/></svg>
<div id="thead"><span style="left:16px">General Discussion</span><span style="left:598px">Last Post</span><span style="left:824px">Topics</span><span style="left:904px">Posts</span></div>
<div class="row" style="top:327px;height:40px">
<div class="c1"><svg class="ic" width="33" height="33" style="left:12px;top:4.5px"><use href="#ic_america"/></svg></div>
<div class="c2"><svg width="18" height="14" style="left:7px;top:14.5px"><use href="#fold_new"/></svg><span class="nm" style="top:13.8px">America</span></div>
<div class="c3"><svg width="20" height="10" style="left:15px;top:10.5px"><use href="#newpost"/></svg><span class="lp" style="top:9.3px"><span class="l1"><b>Today</b> at 3:35pm</span>
In: Re: GOP worry about midte... By: Karnal</span></div>
<div class="c4"><span class="num" style="top:13.8px">10470</span></div>
<div class="c5"><span class="num" style="top:13.8px">327876</span></div>
</div>
<div class="row" style="top:368px;height:43px">
<div class="c1"><svg class="ic" width="33" height="33" style="left:12px;top:6.0px"><use href="#ic_abo"/></svg></div>
<div class="c2"><svg width="18" height="14" style="left:7px;top:16.0px"><use href="#fold_new"/></svg><span class="nm" style="top:15.3px">Aboriginal Affairs</span></div>
<div class="c3"><svg width="20" height="10" style="left:15px;top:4.7px"><use href="#newpost"/></svg><span class="lp" style="top:4.1px"><span class="l1"><b>Today</b> at 3:15pm</span>
In: Re: Young Aboriginal woma... By: Sir Grappler Truth Teller
OAM</span></div>
<div class="c4"><span class="num" style="top:15.3px">852</span></div>
<div class="c5"><span class="num" style="top:15.3px">47529</span></div>
</div>
<div class="row s" style="top:412px;height:41px">
<div class="c1"><svg class="ic" width="33" height="33" style="left:12px;top:5.0px"><use href="#ic_aus"/></svg></div>
<div class="c2"><svg width="18" height="14" style="left:7px;top:15.0px"><use href="#fold_new"/></svg><span class="nm" style="top:14.3px">General Board</span></div>
<div class="c3"><svg width="20" height="10" style="left:15px;top:9.9px"><use href="#newpost"/></svg><span class="lp" style="top:9.3px"><span class="l1"><b>Today</b> at 1:33pm</span>
In: Re: Modern Monetary Theor... By: Bobby.</span></div>
<div class="c4"><span class="num" style="top:14.3px">22017</span></div>
<div class="c5"><span class="num" style="top:14.3px">721335</span></div>
</div>
<div class="row s" style="top:454px;height:41px">
<div class="c1"><svg class="ic" width="33" height="33" style="left:12px;top:5.0px"><use href="#ic_chat"/></svg></div>
<div class="c2"><svg width="18" height="14" style="left:7px;top:15.0px"><use href="#fold_new"/></svg><span class="nm" style="top:14.3px">Chat</span></div>
<div class="c3"><svg width="20" height="10" style="left:15px;top:9.9px"><use href="#newpost"/></svg><span class="lp" style="top:9.3px"><span class="l1"><b>Today</b> at 3:32pm</span>
In: Re: Only Registered Users... By: Carl D</span></div>
<div class="c4"><span class="num" style="top:14.3px">5986</span></div>
<div class="c5"><span class="num" style="top:14.3px">157966</span></div>
</div>
<div class="row s" style="top:496px;height:41px">
<div class="c1"><svg class="ic" width="33" height="33" style="left:12px;top:5.0px"><use href="#ic_fed"/></svg></div>
<div class="c2"><svg width="18" height="14" style="left:7px;top:15.0px"><use href="#fold_new"/></svg><span class="nm" style="top:14.3px">Federal Politics</span></div>
<div class="c3"><svg width="20" height="10" style="left:15px;top:9.9px"><use href="#newpost"/></svg><span class="lp" style="top:9.3px"><span class="l1"><b>Today</b> at 3:14pm</span>
In: Re: Latest polling By: Jasin</span></div>
<div class="c4"><span class="num" style="top:14.3px">33895</span></div>
<div class="c5"><span class="num" style="top:14.3px">971537</span></div>
</div>
<div class="row s" style="top:538px;height:44px">
<div class="c1"><svg class="ic" width="33" height="33" style="left:12px;top:6.5px"><use href="#ic_state"/></svg></div>
<div class="c2"><svg width="18" height="14" style="left:7px;top:16.5px"><use href="#fold_new"/></svg><span class="nm" style="top:15.8px">State and Local</span></div>
<div class="c3"><svg width="20" height="10" style="left:15px;top:5.2px"><use href="#newpost"/></svg><span class="lp" style="top:4.6px"><span class="l1"><b>Today</b> at 3:09pm</span>
In: Re: Kennett's youth farm... By: Sir Grappler Truth Teller
OAM</span></div>
<div class="c4"><span class="num" style="top:15.8px">1040</span></div>
<div class="c5"><span class="num" style="top:15.8px">24838</span></div>
</div>
<div class="row s" style="top:583px;height:41px">
<div class="c1"><svg class="ic" width="33" height="33" style="left:12px;top:5.0px"><use href="#ic_globe"/></svg></div>
<div class="c2"><svg width="18" height="14" style="left:7px;top:15.0px"><use href="#fold_new"/></svg><span class="nm" style="top:14.3px">Thinking Globally</span></div>
<div class="c3"><svg width="20" height="10" style="left:15px;top:9.9px"><use href="#newpost"/></svg><span class="lp" style="top:9.3px"><span class="l1"><b>Today</b> at 3:29pm</span>
In: Re: Israel's right to exi... By: Jasin</span></div>
<div class="c4"><span class="num" style="top:14.3px">6246</span></div>
<div class="c5"><span class="num" style="top:14.3px">152415</span></div>
</div>
<div class="row s" style="top:625px;height:41px">
<div class="c1"><svg class="ic" width="33" height="33" style="left:12px;top:5.0px"><use href="#ic_eu"/></svg></div>
<div class="c2"><svg width="18" height="14" style="left:7px;top:15.0px"><use href="#fold_new"/></svg><span class="nm" style="top:14.3px">Europe</span></div>
<div class="c3"><svg width="20" height="10" style="left:15px;top:9.9px"><use href="#newpost"/></svg><span class="lp" style="top:9.3px"><span class="l1"><b>Yesterday</b> at 5:31pm</span>
In: Re: Mass stabbing UK trai... By: Frank</span></div>
<div class="c4"><span class="num" style="top:14.3px">1038</span></div>
<div class="c5"><span class="num" style="top:14.3px">29749</span></div>
</div>
<div class="row" style="top:667px;height:42px">
<div class="c1"><svg class="ic" width="33" height="33" style="left:12px;top:5.5px"><use href="#ic_tech"/></svg></div>
<div class="c2"><svg width="18" height="14" style="left:7px;top:15.5px"><use href="#fold_new"/></svg><span class="nm" style="top:14.8px">Technically Speaking</span></div>
<div class="c3"><svg width="20" height="10" style="left:15px;top:10.4px"><use href="#newpost"/></svg><span class="lp" style="top:9.8px"><span class="l1"><b>Today</b> at 3:37pm</span>
In: Re: Forum speed By: Bobby.</span></div>
<div class="c4"><span class="num" style="top:14.8px">1605</span></div>
<div class="c5"><span class="num" style="top:14.8px">33066</span></div>
</div>
<div class="row" style="top:710px;height:41px">
<div class="c1"><svg class="ic" width="33" height="33" style="left:12px;top:5.0px"><use href="#ic_feed"/></svg></div>
<div class="c2"><svg width="18" height="14" style="left:7px;top:15.0px"><use href="#fold_old"/></svg><span class="nm" style="top:14.3px">Feedback</span></div>
<div class="c3"><svg width="20" height="10" style="left:15px;top:10.9px"><use href="#newpost"/></svg><span class="lp" style="top:10.3px"><span class="l1">Oct 29<sup>th</sup>, 2025 at 1:45pm</span>
In: Re: Ducking &amp; Weaving Boa... By: Jasin</span></div>
<div class="c4"><span class="num" style="top:14.3px">1068</span></div>
<div class="c5"><span class="num" style="top:14.3px">26865</span></div>
</div>
<div style="left:58px;top:752px;width:967px;height:1px;background:#a9aec8"></div>
</body></html>
